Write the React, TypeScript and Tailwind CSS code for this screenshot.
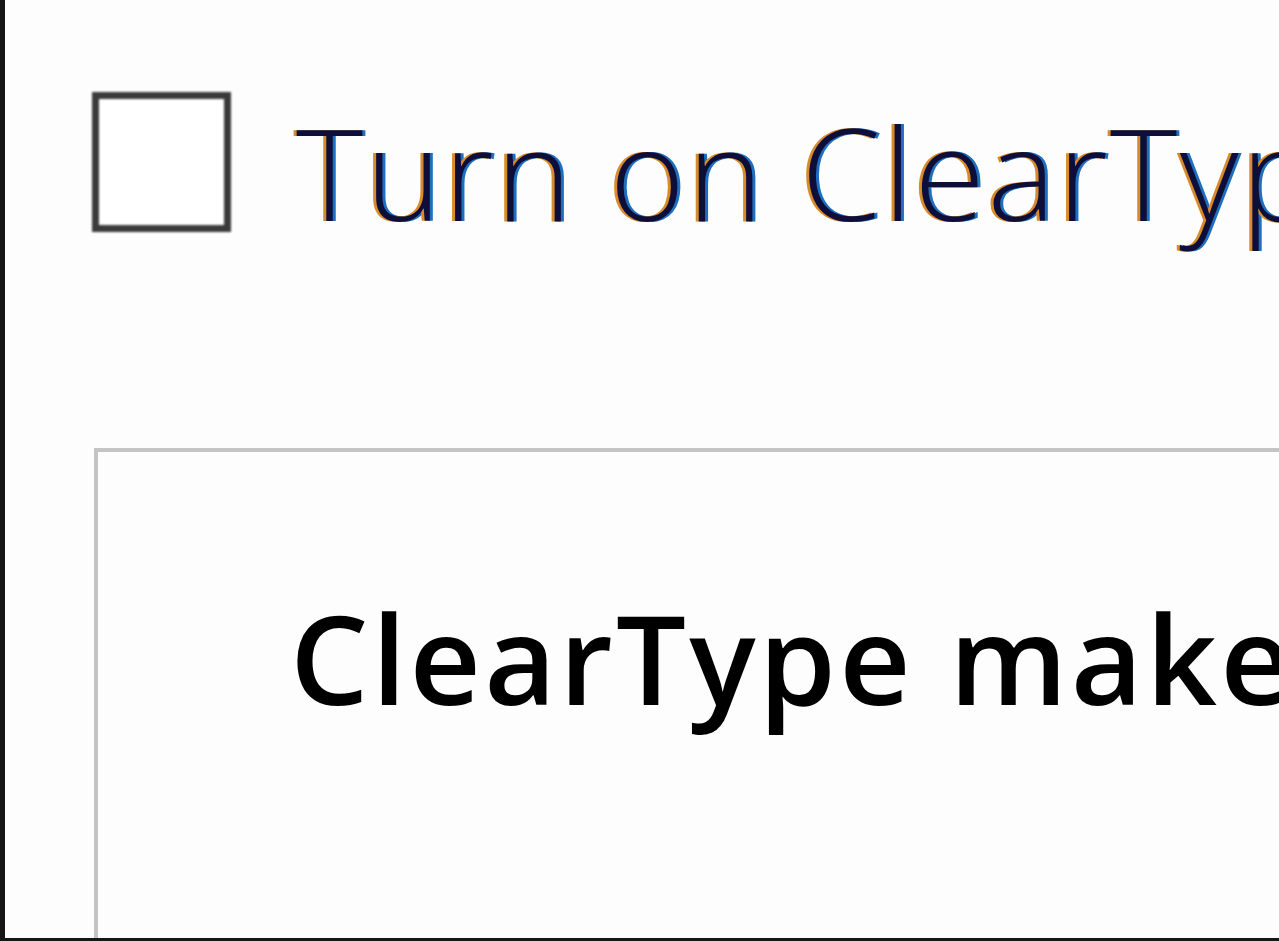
import React from "react";

export default function App() {
  return (
    <div className="w-[1279px] h-[941px] bg-[#161616] overflow-hidden pl-[5px] pb-[3px]">
      <div className="w-full h-full bg-[#fdfdfd] overflow-hidden flex flex-col pl-[87px] pt-[92px]">
        <div className="flex items-start">
          <div className="w-[139px] h-[140px] shrink-0 border-[7px] border-[#3a3a3a] bg-white [filter:blur(0.8px)]" />
          <div
            className="ml-[65px] mt-[16px] whitespace-nowrap text-[128px] leading-none font-light tracking-[2.5px] text-[#0d0f3a] [font-family:'Open_Sans','Noto_Sans',sans-serif] [text-shadow:-3px_0_#d98b2b,3px_0_#1f6fbf] [filter:blur(0.7px)]"
          >
            Turn on ClearType
          </div>
        </div>
        <div className="ml-[2px] mt-[212px] flex-1 border-l-[4px] border-t-[4px] border-[#c4c4c4] pl-[192px] pt-[143px] overflow-hidden [filter:blur(0.6px)]">
          <div className="whitespace-nowrap text-[124px] leading-none font-semibold tracking-[3.2px] text-black [font-family:'Open_Sans','Noto_Sans',sans-serif]">
            ClearType makes
          </div>
        </div>
      </div>
    </div>
  );
}
